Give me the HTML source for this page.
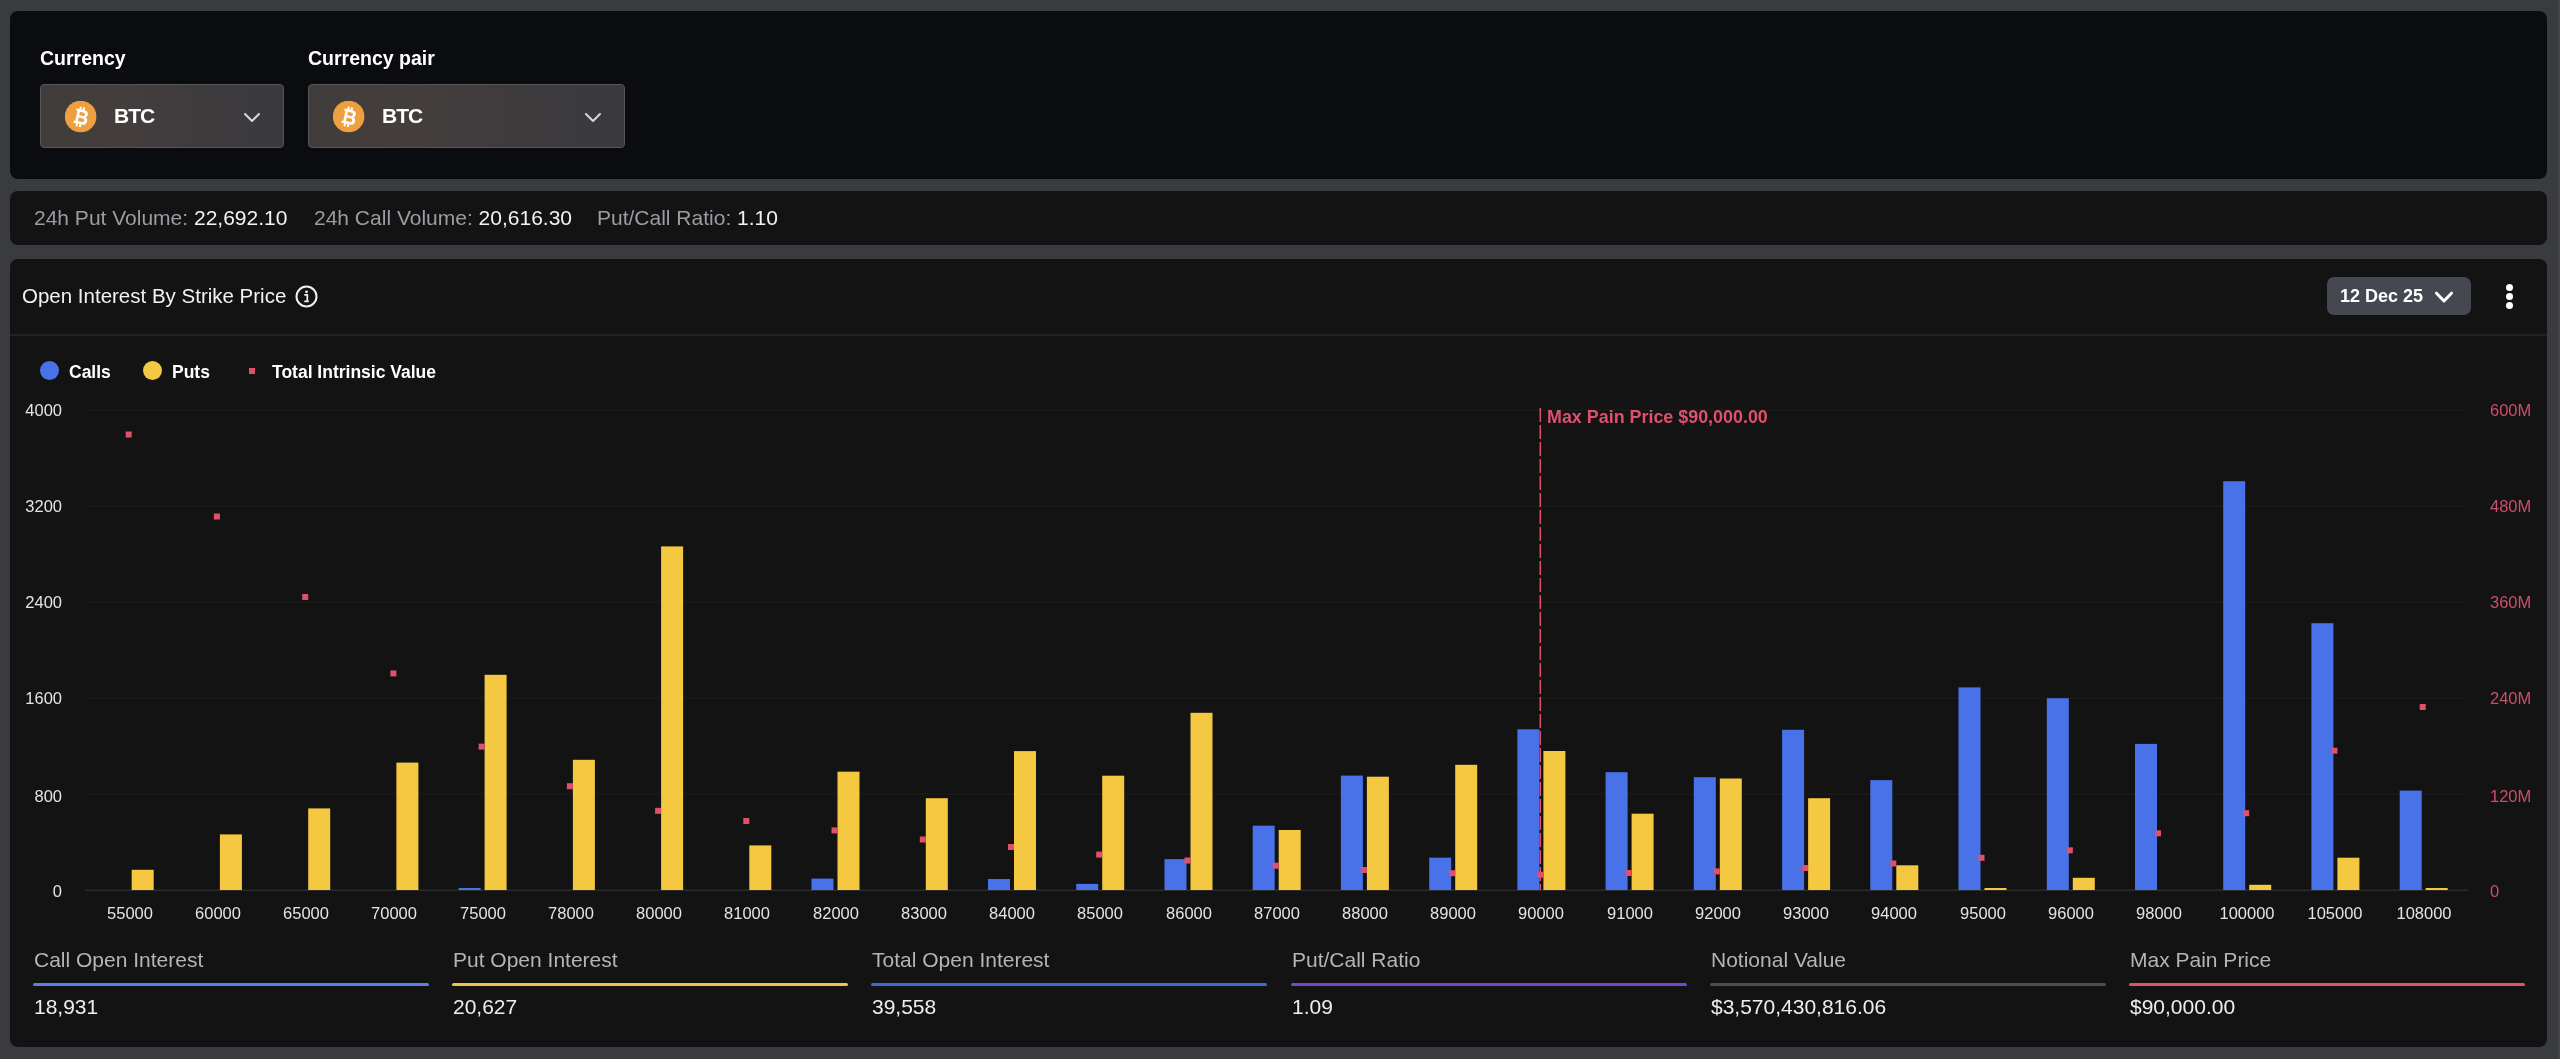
<!DOCTYPE html>
<html><head><meta charset="utf-8"><style>
*{margin:0;padding:0;box-sizing:border-box}
html,body{width:2560px;height:1059px;overflow:hidden;background:#3a3b3f;font-family:"Liberation Sans", sans-serif;}
.abs{position:absolute}
.p1{position:absolute;left:10px;top:11px;width:2537px;height:167.5px;background:#0b0c10;border-radius:8px}
.p2{position:absolute;left:10px;top:190.8px;width:2537px;height:54.6px;background:#131313;border-radius:8px}
.p3{position:absolute;left:10px;top:258.5px;width:2537px;height:788.5px;background:#131313;border-radius:8px}
.lbl{position:absolute;color:#fff;font-weight:bold;font-size:19.5px;line-height:24px;will-change:transform}
.dd{position:absolute;top:84px;height:64px;border-radius:4px;border:1px solid #55555a;background:linear-gradient(90deg,#413c3c 0%,#443e3d 35%,#3e3b3d 70%,#39393f 100%)}
.dd .ic{position:absolute;left:23.5px;top:15.5px;width:32px;height:32px}
.dd .tx{position:absolute;left:73px;top:19px;color:#fff;font-weight:bold;font-size:21px;line-height:24px;letter-spacing:-1px;will-change:transform}
.dd .ch{position:absolute;top:24px}
.vol{position:absolute;top:206px;will-change:transform;font-size:21px;line-height:24px;color:#9c9ca4;white-space:nowrap}
.vol b{font-weight:normal;color:#f2f2f2}
.title{position:absolute;left:22px;top:284px;font-size:20.5px;line-height:24px;color:#f2f2f2;white-space:nowrap;will-change:transform}
.sep{position:absolute;left:10px;top:334px;width:2537px;height:1.5px;background:#212121}
.leg{position:absolute;top:362px;font-size:17.5px;line-height:20px;font-weight:bold;color:#fff;white-space:nowrap;will-change:transform}
.dot{position:absolute;border-radius:50%}
.xl{position:absolute;top:903px;width:100px;text-align:center;font-size:16.5px;line-height:20px;color:#e4e4e4;will-change:transform}
.yl{position:absolute;left:0;width:62px;text-align:right;font-size:16.5px;line-height:20px;color:#e4e4e4;will-change:transform}
.rl{position:absolute;left:2490px;font-size:16.5px;line-height:20px;color:#cc4f69;will-change:transform}
.st{position:absolute;top:946px;width:396px}
.stl{position:absolute;left:1px;top:1px;font-size:21px;line-height:26px;color:#b5b5b5;white-space:nowrap;will-change:transform}
.stbar{position:absolute;left:0;top:36.5px;width:396px;height:3.2px;border-radius:2px}
.stv{position:absolute;left:1px;top:48px;font-size:21px;line-height:26px;color:#eeeeee;white-space:nowrap;will-change:transform}
</style></head><body>
<div class="abs" style="left:2558px;top:0;width:2px;height:1059px;background:#45464a"></div>
<div class="p1"></div>
<div class="p2"></div>
<div class="p3"></div>

<div class="lbl" style="left:40px;top:45.5px">Currency</div>
<div class="lbl" style="left:308px;top:45.5px">Currency pair</div>
<div class="dd" style="left:40px;width:244px"><div class="ic"><svg width="32" height="32" viewBox="0 0 32 32"><circle cx="15.6" cy="15.5" r="15.8" fill="#eea040"/><g transform="rotate(13 16 16)" fill="#fff"><path fill-rule="evenodd" d="M9.8 8.6H18C20.7 8.6 22.1 10.1 22.1 12.2C22.1 13.7 21.3 14.8 20 15.2C21.8 15.6 22.9 17 22.9 18.9C22.9 21.5 21.1 23.3 18.1 23.3H9.8V21.1H11.2V10.8H9.8Z M13.9 11.2V14.6H17.6C18.7 14.6 19.3 14 19.3 12.9C19.3 11.8 18.7 11.2 17.6 11.2Z M13.9 17V20.7H18C19.2 20.7 19.9 20 19.9 18.85C19.9 17.7 19.2 17 18 17Z"/><rect x="12.6" y="6" width="2" height="3.2"/><rect x="16" y="6" width="2" height="3.2"/><rect x="12.6" y="22.8" width="2" height="3.2"/><rect x="16" y="22.8" width="2" height="3.2"/></g></svg></div><div class="tx">BTC</div><div class="ch" style="left:201.5px"><svg width="18" height="11" viewBox="0 0 18 11"><path d="M2 2 L9 9 L16 2" fill="none" stroke="#d8d8dc" stroke-width="2" stroke-linecap="round" stroke-linejoin="round"/></svg></div></div>
<div class="dd" style="left:308px;width:317px"><div class="ic"><svg width="32" height="32" viewBox="0 0 32 32"><circle cx="15.6" cy="15.5" r="15.8" fill="#eea040"/><g transform="rotate(13 16 16)" fill="#fff"><path fill-rule="evenodd" d="M9.8 8.6H18C20.7 8.6 22.1 10.1 22.1 12.2C22.1 13.7 21.3 14.8 20 15.2C21.8 15.6 22.9 17 22.9 18.9C22.9 21.5 21.1 23.3 18.1 23.3H9.8V21.1H11.2V10.8H9.8Z M13.9 11.2V14.6H17.6C18.7 14.6 19.3 14 19.3 12.9C19.3 11.8 18.7 11.2 17.6 11.2Z M13.9 17V20.7H18C19.2 20.7 19.9 20 19.9 18.85C19.9 17.7 19.2 17 18 17Z"/><rect x="12.6" y="6" width="2" height="3.2"/><rect x="16" y="6" width="2" height="3.2"/><rect x="12.6" y="22.8" width="2" height="3.2"/><rect x="16" y="22.8" width="2" height="3.2"/></g></svg></div><div class="tx">BTC</div><div class="ch" style="left:274.5px"><svg width="18" height="11" viewBox="0 0 18 11"><path d="M2 2 L9 9 L16 2" fill="none" stroke="#d8d8dc" stroke-width="2" stroke-linecap="round" stroke-linejoin="round"/></svg></div></div>

<div class="vol" style="left:34px">24h Put Volume: <b>22,692.10</b></div><div class="vol" style="left:313.5px">24h Call Volume: <b>20,616.30</b></div><div class="vol" style="left:597px">Put/Call Ratio: <b>1.10</b></div>

<div class="title">Open Interest By Strike Price</div>
<svg class="abs" style="left:295px;top:285px" width="23" height="23" viewBox="0 0 23 23"><circle cx="11.5" cy="11.5" r="10" fill="none" stroke="#f0f0f0" stroke-width="2"/><circle cx="11.5" cy="6.8" r="1.4" fill="#f0f0f0"/><path d="M9.3 9.8h3v6.6h1.5M9.3 16.4h4.5" fill="none" stroke="#f0f0f0" stroke-width="1.7"/></svg>

<div class="abs" style="left:2327px;top:277px;width:144px;height:38px;background:#454850;border-radius:7px"></div>
<div class="abs" style="left:2340px;top:284px;font-size:18px;line-height:24px;font-weight:bold;color:#fff;white-space:nowrap;will-change:transform">12 Dec 25</div>
<svg class="abs" style="left:2434px;top:290px" width="20" height="14" viewBox="0 0 20 14"><path d="M2.5 3.2 L10 11 L17.5 3.2" fill="none" stroke="#fff" stroke-width="3" stroke-linecap="round" stroke-linejoin="round"/></svg>
<div class="dot" style="left:2506px;top:283.5px;width:7px;height:7px;background:#fff"></div>
<div class="dot" style="left:2506px;top:292.5px;width:7px;height:7px;background:#fff"></div>
<div class="dot" style="left:2506px;top:301.5px;width:7px;height:7px;background:#fff"></div>

<div class="sep"></div>

<div class="dot" style="left:39.5px;top:361px;width:19px;height:19px;background:#4a72e8"></div>
<div class="leg" style="left:69px">Calls</div>
<div class="dot" style="left:143px;top:361px;width:19px;height:19px;background:#f5c842"></div>
<div class="leg" style="left:172px">Puts</div>
<div class="abs" style="left:249px;top:368px;width:6px;height:6px;background:#e0506a"></div>
<div class="leg" style="left:272px">Total Intrinsic Value</div>

<svg class="abs" style="left:0;top:0" width="2560" height="1059">
<rect x="87" y="409.5" width="2378" height="1" fill="#1f1f1f"/>
<rect x="87" y="505.5" width="2378" height="1" fill="#1f1f1f"/>
<rect x="87" y="601.5" width="2378" height="1" fill="#1f1f1f"/>
<rect x="87" y="697.5" width="2378" height="1" fill="#1f1f1f"/>
<rect x="87" y="793.5" width="2378" height="1" fill="#1f1f1f"/>
<rect x="85" y="889.5" width="2383" height="1.5" fill="#2c2c2c"/>
<rect x="131.7" y="869.8" width="22" height="20.2" fill="#f5c842"/>
<rect x="219.9" y="834.4" width="22" height="55.6" fill="#f5c842"/>
<rect x="308.2" y="808.4" width="22" height="81.6" fill="#f5c842"/>
<rect x="396.4" y="762.6" width="22" height="127.4" fill="#f5c842"/>
<rect x="458.6" y="888.0" width="22" height="2.0" fill="#4a72e8"/>
<rect x="484.6" y="674.8" width="22" height="215.2" fill="#f5c842"/>
<rect x="572.9" y="759.8" width="22" height="130.2" fill="#f5c842"/>
<rect x="661.1" y="546.4" width="22" height="343.6" fill="#f5c842"/>
<rect x="749.3" y="845.4" width="22" height="44.6" fill="#f5c842"/>
<rect x="811.5" y="878.6" width="22" height="11.4" fill="#4a72e8"/>
<rect x="837.5" y="771.7" width="22" height="118.3" fill="#f5c842"/>
<rect x="925.8" y="798.2" width="22" height="91.8" fill="#f5c842"/>
<rect x="988.0" y="879.0" width="22" height="11.0" fill="#4a72e8"/>
<rect x="1014.0" y="751.1" width="22" height="138.9" fill="#f5c842"/>
<rect x="1076.2" y="883.9" width="22" height="6.1" fill="#4a72e8"/>
<rect x="1102.2" y="775.7" width="22" height="114.3" fill="#f5c842"/>
<rect x="1164.5" y="859.1" width="22" height="30.9" fill="#4a72e8"/>
<rect x="1190.5" y="712.8" width="22" height="177.2" fill="#f5c842"/>
<rect x="1252.7" y="825.7" width="22" height="64.3" fill="#4a72e8"/>
<rect x="1278.7" y="830.0" width="22" height="60.0" fill="#f5c842"/>
<rect x="1340.9" y="775.6" width="22" height="114.4" fill="#4a72e8"/>
<rect x="1366.9" y="776.7" width="22" height="113.3" fill="#f5c842"/>
<rect x="1429.2" y="857.7" width="22" height="32.3" fill="#4a72e8"/>
<rect x="1455.2" y="764.8" width="22" height="125.2" fill="#f5c842"/>
<rect x="1517.4" y="729.3" width="22" height="160.7" fill="#4a72e8"/>
<rect x="1543.4" y="751.0" width="22" height="139.0" fill="#f5c842"/>
<rect x="1605.6" y="772.2" width="22" height="117.8" fill="#4a72e8"/>
<rect x="1631.6" y="813.7" width="22" height="76.3" fill="#f5c842"/>
<rect x="1693.8" y="777.2" width="22" height="112.8" fill="#4a72e8"/>
<rect x="1719.8" y="778.5" width="22" height="111.5" fill="#f5c842"/>
<rect x="1782.1" y="729.8" width="22" height="160.2" fill="#4a72e8"/>
<rect x="1808.1" y="798.2" width="22" height="91.8" fill="#f5c842"/>
<rect x="1870.3" y="780.1" width="22" height="109.9" fill="#4a72e8"/>
<rect x="1896.3" y="865.3" width="22" height="24.7" fill="#f5c842"/>
<rect x="1958.5" y="687.4" width="22" height="202.6" fill="#4a72e8"/>
<rect x="1984.5" y="888.0" width="22" height="2.0" fill="#f5c842"/>
<rect x="2046.8" y="698.2" width="22" height="191.8" fill="#4a72e8"/>
<rect x="2072.8" y="877.8" width="22" height="12.2" fill="#f5c842"/>
<rect x="2135.0" y="743.9" width="22" height="146.1" fill="#4a72e8"/>
<rect x="2223.2" y="481.2" width="22" height="408.8" fill="#4a72e8"/>
<rect x="2249.2" y="884.8" width="22" height="5.2" fill="#f5c842"/>
<rect x="2311.4" y="623.2" width="22" height="266.8" fill="#4a72e8"/>
<rect x="2337.4" y="857.7" width="22" height="32.3" fill="#f5c842"/>
<rect x="2399.7" y="790.6" width="22" height="99.4" fill="#4a72e8"/>
<rect x="2425.7" y="888.0" width="22" height="2.0" fill="#f5c842"/>
<rect x="125.7" y="431.5" width="6" height="6" fill="#e0506a"/>
<rect x="213.9" y="513.5" width="6" height="6" fill="#e0506a"/>
<rect x="302.2" y="594.0" width="6" height="6" fill="#e0506a"/>
<rect x="390.4" y="670.4" width="6" height="6" fill="#e0506a"/>
<rect x="478.6" y="743.6" width="6" height="6" fill="#e0506a"/>
<rect x="566.9" y="783.2" width="6" height="6" fill="#e0506a"/>
<rect x="655.1" y="807.8" width="6" height="6" fill="#e0506a"/>
<rect x="743.3" y="818.0" width="6" height="6" fill="#e0506a"/>
<rect x="831.5" y="827.4" width="6" height="6" fill="#e0506a"/>
<rect x="919.8" y="836.5" width="6" height="6" fill="#e0506a"/>
<rect x="1008.0" y="844.0" width="6" height="6" fill="#e0506a"/>
<rect x="1096.2" y="851.6" width="6" height="6" fill="#e0506a"/>
<rect x="1184.5" y="857.5" width="6" height="6" fill="#e0506a"/>
<rect x="1272.7" y="862.7" width="6" height="6" fill="#e0506a"/>
<rect x="1360.9" y="867.0" width="6" height="6" fill="#e0506a"/>
<rect x="1449.2" y="870.2" width="6" height="6" fill="#e0506a"/>
<rect x="1537.4" y="871.7" width="6" height="6" fill="#e0506a"/>
<rect x="1625.6" y="870.0" width="6" height="6" fill="#e0506a"/>
<rect x="1713.8" y="868.4" width="6" height="6" fill="#e0506a"/>
<rect x="1802.1" y="865.0" width="6" height="6" fill="#e0506a"/>
<rect x="1890.3" y="860.5" width="6" height="6" fill="#e0506a"/>
<rect x="1978.5" y="854.8" width="6" height="6" fill="#e0506a"/>
<rect x="2066.8" y="847.3" width="6" height="6" fill="#e0506a"/>
<rect x="2155.0" y="830.3" width="6" height="6" fill="#e0506a"/>
<rect x="2243.2" y="810.2" width="6" height="6" fill="#e0506a"/>
<rect x="2331.4" y="747.7" width="6" height="6" fill="#e0506a"/>
<rect x="2419.7" y="704.0" width="6" height="6" fill="#e0506a"/>
<line x1="1540.3" y1="408" x2="1540.3" y2="890.0" stroke="#e0506a" stroke-width="1.5" stroke-dasharray="14 3"/>
</svg>

<div class="abs" style="left:1547px;top:406px;font-size:17.9px;line-height:22px;font-weight:bold;color:#e0506c;white-space:nowrap;will-change:transform">Max Pain Price $90,000.00</div>

<div class="yl" style="top:400px">4000</div>
<div class="yl" style="top:496px">3200</div>
<div class="yl" style="top:591.5px">2400</div>
<div class="yl" style="top:688px">1600</div>
<div class="yl" style="top:786px">800</div>
<div class="yl" style="top:881px">0</div>
<div class="rl" style="top:400px">600M</div>
<div class="rl" style="top:496px">480M</div>
<div class="rl" style="top:591.5px">360M</div>
<div class="rl" style="top:688px">240M</div>
<div class="rl" style="top:786px">120M</div>
<div class="rl" style="top:881.3px">0</div>
<div class="xl" style="left:79.7px">55000</div>
<div class="xl" style="left:167.9px">60000</div>
<div class="xl" style="left:256.2px">65000</div>
<div class="xl" style="left:344.4px">70000</div>
<div class="xl" style="left:432.6px">75000</div>
<div class="xl" style="left:520.9px">78000</div>
<div class="xl" style="left:609.1px">80000</div>
<div class="xl" style="left:697.3px">81000</div>
<div class="xl" style="left:785.5px">82000</div>
<div class="xl" style="left:873.8px">83000</div>
<div class="xl" style="left:962.0px">84000</div>
<div class="xl" style="left:1050.2px">85000</div>
<div class="xl" style="left:1138.5px">86000</div>
<div class="xl" style="left:1226.7px">87000</div>
<div class="xl" style="left:1314.9px">88000</div>
<div class="xl" style="left:1403.2px">89000</div>
<div class="xl" style="left:1491.4px">90000</div>
<div class="xl" style="left:1579.6px">91000</div>
<div class="xl" style="left:1667.8px">92000</div>
<div class="xl" style="left:1756.1px">93000</div>
<div class="xl" style="left:1844.3px">94000</div>
<div class="xl" style="left:1932.5px">95000</div>
<div class="xl" style="left:2020.8px">96000</div>
<div class="xl" style="left:2109.0px">98000</div>
<div class="xl" style="left:2197.2px">100000</div>
<div class="xl" style="left:2285.4px">105000</div>
<div class="xl" style="left:2373.7px">108000</div>

<div class="st" style="left:33.0px"><div class="stl">Call Open Interest</div><div class="stbar" style="background:#5b7fe6"></div><div class="stv">18,931</div></div>
<div class="st" style="left:452.2px"><div class="stl">Put Open Interest</div><div class="stbar" style="background:#f0c445"></div><div class="stv">20,627</div></div>
<div class="st" style="left:871.4px"><div class="stl">Total Open Interest</div><div class="stbar" style="background:#4168d0"></div><div class="stv">39,558</div></div>
<div class="st" style="left:1290.6px"><div class="stl">Put/Call Ratio</div><div class="stbar" style="background:#7246da"></div><div class="stv">1.09</div></div>
<div class="st" style="left:1709.8px"><div class="stl">Notional Value</div><div class="stbar" style="background:#4a4c52"></div><div class="stv">$3,570,430,816.06</div></div>
<div class="st" style="left:2129.0px"><div class="stl">Max Pain Price</div><div class="stbar" style="background:#e2506e"></div><div class="stv">$90,000.00</div></div>
</body></html>
